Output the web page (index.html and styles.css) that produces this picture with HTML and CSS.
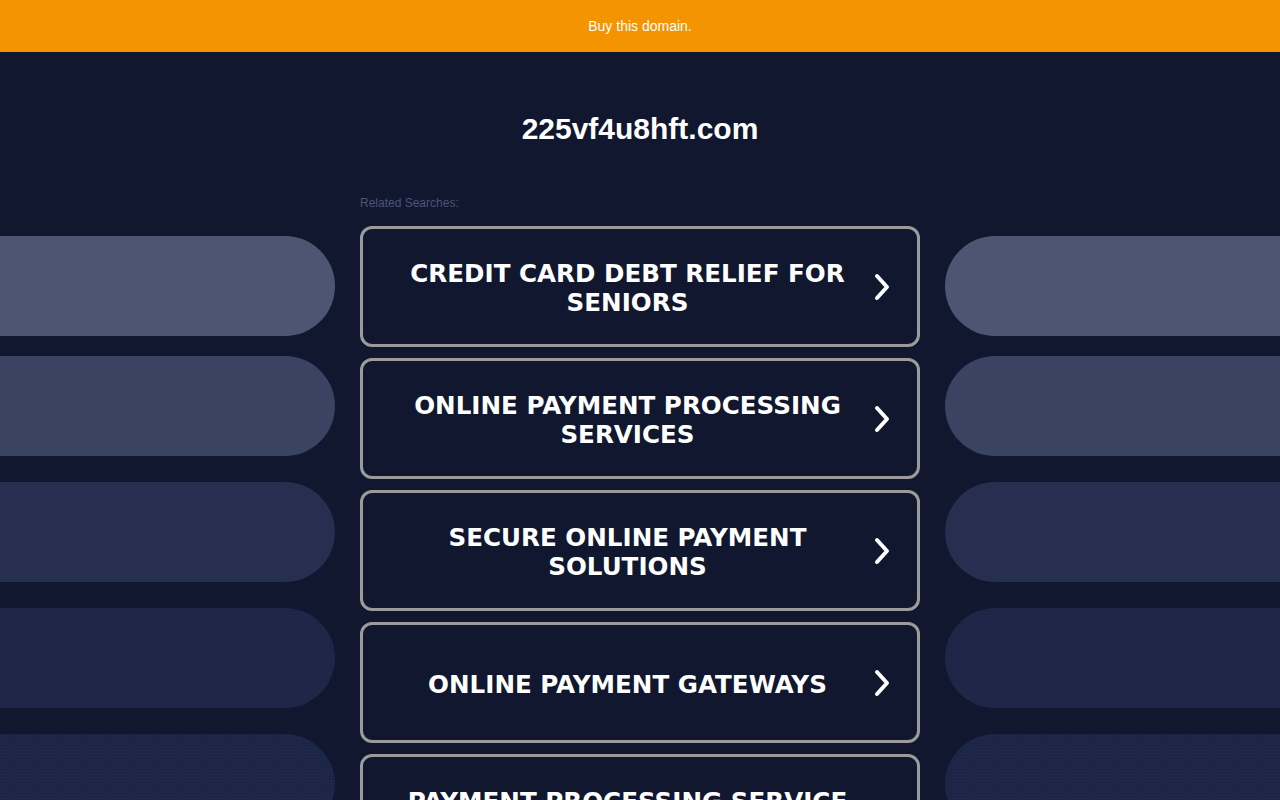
FILE: index.html
```html
<!DOCTYPE html>
<html lang="en">
<head>
<meta charset="utf-8">
<title>225vf4u8hft.com</title>
<link rel="stylesheet" href="styles.css">
</head>
<body>
<div class="topbar"><a class="buy" href="#">Buy this domain.</a></div>
<h1 class="domain">225vf4u8hft.com</h1>
<div class="main">
  <div class="side side-left">
    <div class="pill p1"></div>
    <div class="pill p2"></div>
    <div class="pill p3"></div>
    <div class="pill p4"></div>
    <div class="pill p5"></div>
  </div>
  <div class="center">
    <div class="label">Related Searches:</div>
    <a class="card" href="#"><span class="card-text">CREDIT CARD DEBT RELIEF FOR SENIORS</span><svg class="chev" viewBox="0 0 16 28" width="16" height="28"><polyline points="3,3 13,14 3,25" fill="none" stroke="#fff" stroke-width="4" stroke-linecap="round" stroke-linejoin="round"/></svg></a>
    <a class="card" href="#"><span class="card-text">ONLINE PAYMENT PROCESSING SERVICES</span><svg class="chev" viewBox="0 0 16 28" width="16" height="28"><polyline points="3,3 13,14 3,25" fill="none" stroke="#fff" stroke-width="4" stroke-linecap="round" stroke-linejoin="round"/></svg></a>
    <a class="card" href="#"><span class="card-text">SECURE ONLINE PAYMENT SOLUTIONS</span><svg class="chev" viewBox="0 0 16 28" width="16" height="28"><polyline points="3,3 13,14 3,25" fill="none" stroke="#fff" stroke-width="4" stroke-linecap="round" stroke-linejoin="round"/></svg></a>
    <a class="card" href="#"><span class="card-text">ONLINE PAYMENT GATEWAYS</span><svg class="chev" viewBox="0 0 16 28" width="16" height="28"><polyline points="3,3 13,14 3,25" fill="none" stroke="#fff" stroke-width="4" stroke-linecap="round" stroke-linejoin="round"/></svg></a>
    <a class="card" href="#"><span class="card-text">PAYMENT PROCESSING SERVICE PROVIDERS</span><svg class="chev" viewBox="0 0 16 28" width="16" height="28"><polyline points="3,3 13,14 3,25" fill="none" stroke="#fff" stroke-width="4" stroke-linecap="round" stroke-linejoin="round"/></svg></a>
  </div>
  <div class="side side-right">
    <div class="pill p1"></div>
    <div class="pill p2"></div>
    <div class="pill p3"></div>
    <div class="pill p4"></div>
    <div class="pill p5"></div>
  </div>
</div>
</body>
</html>
```
FILE: styles.css
```css
html, body {
  margin: 0;
  padding: 0;
}
body {
  background: #11172f;
  font-family: "Liberation Sans", Arial, sans-serif;
  color: #fff;
  overflow: hidden;
}
.topbar {
  height: 52px;
  background: #f39400;
  display: flex;
  align-items: center;
  justify-content: center;
}
.buy {
  color: #fff;
  font-size: 14px;
  text-decoration: none;
  line-height: 16px;
}
.domain {
  margin: 59px 0 0;
  font-size: 30px;
  line-height: 36px;
  font-weight: bold;
  text-align: center;
  color: #fff;
}
.main {
  margin-top: 48px;
  display: grid;
  grid-template-columns: 335px 560px 335px;
  column-gap: 25px;
}
.side {
  padding-top: 41px;
  display: flex;
  flex-direction: column;
}
.pill {
  height: 100px;
  flex: none;
}
.side-left .pill {
  border-radius: 0 50px 50px 0;
}
.side-right .pill {
  border-radius: 50px 0 0 50px;
}
.pill.p2 { margin-top: 20px; }
.pill.p3, .pill.p4, .pill.p5 { margin-top: 26px; }
.p1 { background: #4c5673; }
.p2 { background: #3a4361; }
.p3 { background: #262f4f; }
.p4 {
  background-color: #1d2647;
  background-image: radial-gradient(circle, rgba(50, 64, 105, 0.25) 0.6px, transparent 0.9px);
  background-size: 3px 3px;
}
.p5 {
  background-color: #1c2546;
  background-image: radial-gradient(circle, rgba(50, 64, 105, 0.3) 0.6px, transparent 0.9px);
  background-size: 3px 3px;
}
.center {
  display: flex;
  flex-direction: column;
}
.label {
  font-size: 12px;
  line-height: 16px;
  color: #4b5675;
  margin-bottom: 15px;
}
.card {
  box-sizing: border-box;
  height: 121px;
  border: 3px solid #9b9b9b;
  border-radius: 12px;
  display: flex;
  align-items: center;
  padding: 0 27px 0 30px;
  gap: 12px;
  text-decoration: none;
  color: #fff;
  margin-bottom: 11px;
  flex: none;
}
.card-text {
  flex: 1;
  text-align: center;
  font-family: "DejaVu Sans", Verdana, sans-serif;
  font-weight: bold;
  font-size: 24.6px;
  line-height: 29px;
  padding-top: 3px;
}
.chev {
  flex: none;
  display: block;
}
```
